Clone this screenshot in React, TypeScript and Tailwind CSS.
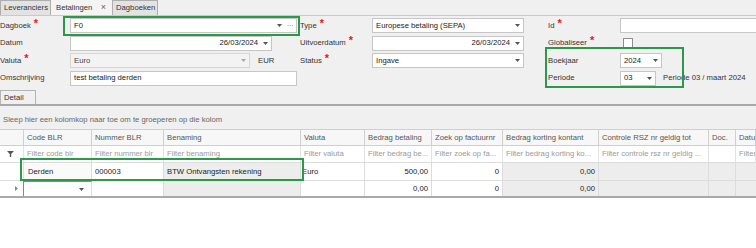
import React from 'react';

const Req = () => <span className="ml-[3px] text-[11px] leading-none font-bold text-[#e8141c] relative -top-[2px]">*</span>;

const Arrow = ({ light = false }: { light?: boolean }) => (
  <svg width="5" height="3" viewBox="0 0 5 3" className="shrink-0">
    <path d="M0 0h5L2.5 3z" fill={light ? '#aaa' : '#555'} />
  </svg>
);

const Field: React.FC<{ className?: string; children?: React.ReactNode }> = ({ className = '', children }) => (
  <div className={`h-[15px] border border-[#c6c6c6] bg-white flex items-center px-[3px] ${className}`}>{children}</div>
);

const Label: React.FC<{ w: string; req?: boolean; children: React.ReactNode }> = ({ w, req, children }) => (
  <div className={`${w} shrink-0 text-[#333] flex items-start`}>
    <span>{children}</span>
    {req && <Req />}
  </div>
);

const colW = ['w-[24px]', 'w-[68px]', 'w-[72px]', 'w-[137px]', 'w-[64px]', 'w-[67px]', 'w-[71px]', 'w-[96px]', 'w-[110px]', 'w-[27px]', 'flex-1'];

const headers = ['', 'Code BLR', 'Nummer BLR', 'Benaming', 'Valuta', 'Bedrag betaling', 'Zoek op factuurnr', 'Bedrag korting kontant', 'Controle RSZ nr geldig tot', 'Doc.', 'Datum'];
const filters = ['', 'Filter code blr', 'Filter nummer blr', 'Filter benaming', 'Filter valuta', 'Filter bedrag be...', 'Filter zoek op fa...', 'Filter bedrag korting ko...', 'Filter controle rsz nr geldig ...', '', 'Filter'];

export default function App() {
  return (
    <div className="w-[756px] h-[248px] bg-white overflow-hidden font-['Liberation_Sans',Arial,sans-serif] text-[7.7px] text-[#222] relative">
      {/* tabs */}
      <div className="h-[16px] bg-[#f0f0f0] border-b border-[#c9c9c9] flex items-end">
        <div className="w-[51px] h-[15px] bg-[#e3e3e3] border border-b-0 border-[#adadad] flex items-center pl-[3px] text-[#333]">Leveranciers</div>
        <div className="w-[61px] h-[15px] bg-[#f4f4f4] flex items-center pl-[5px] text-[#333]">
          <span className="flex-1">Betalingen</span>
          <span className="mr-[6px] text-[9px] text-[#666]">×</span>
        </div>
        <div className="w-[46px] h-[15px] bg-[#e3e3e3] border border-b-0 border-[#adadad] flex items-center pl-[3px] text-[#333]">Dagboeken</div>
      </div>

      {/* form */}
      <div className="h-[72px] bg-[#f0f0f0] flex pt-[1px]">
        <div className="w-[300px] shrink-0 flex flex-col">
          <div className="h-[17.5px] flex items-center">
            <Label w="w-[70px]" req>Dagboek</Label>
            <Field className="w-[227px]">
              <span className="flex-1">F0</span>
              <Arrow />
              <span className="ml-[5px] text-[#666] tracking-[-0.5px]">···</span>
            </Field>
          </div>
          <div className="h-[17.5px] flex items-center">
            <Label w="w-[70px]">Datum</Label>
            <Field className="w-[202px] justify-end">
              <span>26/03/2024</span>
              <span className="ml-[5px]"><Arrow /></span>
            </Field>
          </div>
          <div className="h-[17.5px] flex items-center">
            <Label w="w-[70px]" req>Valuta</Label>
            <Field className="w-[180px] !bg-[#f3f3f3] !border-[#d6d6d6]">
              <span className="flex-1 text-[#444]">Euro</span>
              <Arrow light />
            </Field>
            <span className="ml-[8px] text-[#333]">EUR</span>
          </div>
          <div className="h-[17.5px] flex items-center">
            <Label w="w-[70px]">Omschrijving</Label>
            <Field className="w-[227px]">test betaling derden</Field>
          </div>
        </div>

        <div className="w-[248px] shrink-0 flex flex-col">
          <div className="h-[17.5px] flex items-center">
            <Label w="w-[72px]" req>Type</Label>
            <Field className="w-[152px]">
              <span className="flex-1">Europese betaling (SEPA)</span>
              <Arrow />
            </Field>
          </div>
          <div className="h-[17.5px] flex items-center">
            <Label w="w-[72px]" req>Uitvoerdatum</Label>
            <Field className="w-[152px] justify-end">
              <span>26/03/2024</span>
              <span className="ml-[5px]"><Arrow /></span>
            </Field>
          </div>
          <div className="h-[17.5px] flex items-center">
            <Label w="w-[72px]" req>Status</Label>
            <Field className="w-[152px]">
              <span className="flex-1">Ingave</span>
              <Arrow />
            </Field>
          </div>
        </div>

        <div className="flex-1 flex flex-col">
          <div className="h-[17.5px] flex items-center">
            <Label w="w-[72px]" req>Id</Label>
            <Field className="flex-1 border-r-0" />
          </div>
          <div className="h-[17.5px] flex items-center">
            <Label w="w-[72px]" req>Globaliseer</Label>
            <div className="ml-[3px] w-[10px] h-[10px] border border-[#8f8f8f] bg-white" />
          </div>
          <div className="h-[17.5px] flex items-center">
            <Label w="w-[72px]">Boekjaar</Label>
            <Field className="w-[42px]">
              <span className="flex-1">2024</span>
              <Arrow />
            </Field>
          </div>
          <div className="h-[17.5px] flex items-center">
            <Label w="w-[72px]">Periode</Label>
            <Field className="w-[36px]">
              <span className="flex-1">03</span>
              <Arrow />
            </Field>
            <span className="ml-[7px] text-[#333]">Periode 03 / maart 2024</span>
          </div>
        </div>
      </div>

      {/* detail tab */}
      <div className="h-[16px] bg-[#f0f0f0] flex items-end">
        <div className="w-[36px] h-[14px] bg-[#f0f0f0] border border-b-0 border-[#b4b4b4] flex items-center pl-[3px] text-[#333]">Detail</div>
      </div>
      <div className="h-[2px] bg-[#a9a9a9]" />

      {/* group panel */}
      <div className="h-[23px] bg-[#f0f0f0] flex items-center pl-[3px] pt-[4px] text-[#666]">
        Sleep hier een kolomkop naar toe om te groeperen op die kolom
      </div>

      {/* grid */}
      <div className="flex flex-col">
        <div className="h-[17px] flex bg-[#f7f7f7] border-t border-b border-[#cfcfcf]">
          {headers.map((h, i) => (
            <div key={i} className={`${colW[i]} shrink-0 border-r border-[#cfcfcf] flex items-center pl-[3px] text-[#555] whitespace-nowrap overflow-hidden`}>{h}</div>
          ))}
        </div>
        <div className="h-[17px] flex bg-white border-b border-[#dcdcdc]">
          {filters.map((f, i) => (
            <div key={i} className={`${colW[i]} shrink-0 border-r border-[#e2e2e2] flex items-center pl-[3px] text-[#9a9a9a] whitespace-nowrap overflow-hidden`}>
              {i === 0 ? (
                <svg width="7" height="6" viewBox="0 0 7 6" className="ml-[4px]"><path d="M0 0h7L4.2 3v3h-1.4V3z" fill="#555" /></svg>
              ) : f}
            </div>
          ))}
        </div>
        {/* data row */}
        <div className="h-[18px] flex border-b border-[#dcdcdc]">
          <div className="w-[24px] shrink-0 bg-white border-r border-[#dcdcdc]" />
          <div className="w-[68px] shrink-0 bg-[#fafafa] border-r border-[#dcdcdc] flex items-center pl-[4px]">Derden</div>
          <div className="w-[72px] shrink-0 bg-white border-r border-[#dcdcdc] flex items-center pl-[3px]">000003</div>
          <div className="w-[137px] shrink-0 bg-[#ededed] border-r border-[#dcdcdc] flex items-center pl-[3px]">BTW Ontvangsten rekening</div>
          <div className="w-[64px] shrink-0 bg-white border-r border-[#dcdcdc] flex items-center pl-[1px]">Euro</div>
          <div className="w-[67px] shrink-0 bg-white border-r border-[#dcdcdc] flex items-center justify-end pr-[3px]">500,00</div>
          <div className="w-[71px] shrink-0 bg-white border-r border-[#dcdcdc] flex items-center justify-end pr-[3px]">0</div>
          <div className="w-[96px] shrink-0 bg-[#ededed] border-r border-[#dcdcdc] flex items-center justify-end pr-[3px]">0,00</div>
          <div className="w-[110px] shrink-0 bg-[#ededed] border-r border-[#dcdcdc]" />
          <div className="w-[27px] shrink-0 bg-[#ededed] border-r border-[#dcdcdc]" />
          <div className="flex-1 bg-[#ededed]" />
        </div>
        {/* new row */}
        <div className="h-[17px] flex border-b-2 border-[#a9a9a9]">
          <div className="w-[24px] shrink-0 bg-white border-r border-[#888] flex items-center justify-end pr-[5px]">
            <svg width="3" height="5" viewBox="0 0 3 5"><path d="M0 0l3 2.5L0 5z" fill="#888" /></svg>
          </div>
          <div className="w-[68px] shrink-0 bg-white border-r border-[#dcdcdc] border-t border-t-[#888] flex items-center justify-end pr-[7px]"><Arrow /></div>
          <div className="w-[72px] shrink-0 bg-white border-r border-[#dcdcdc]" />
          <div className="w-[137px] shrink-0 bg-[#ededed] border-r border-[#dcdcdc]" />
          <div className="w-[64px] shrink-0 bg-white border-r border-[#dcdcdc]" />
          <div className="w-[67px] shrink-0 bg-white border-r border-[#dcdcdc] flex items-center justify-end pr-[3px]">0,00</div>
          <div className="w-[71px] shrink-0 bg-white border-r border-[#dcdcdc] flex items-center justify-end pr-[3px]">0</div>
          <div className="w-[96px] shrink-0 bg-[#ededed] border-r border-[#dcdcdc] flex items-center justify-end pr-[3px]">0,00</div>
          <div className="w-[110px] shrink-0 bg-[#ededed] border-r border-[#dcdcdc]" />
          <div className="w-[27px] shrink-0 bg-[#ededed] border-r border-[#dcdcdc]" />
          <div className="flex-1 bg-[#ededed]" />
        </div>
      </div>

      {/* annotation boxes */}
      <div className="absolute left-[63px] top-[16px] w-[237px] h-[20px] border-2 border-[#2a9a4a] pointer-events-none" />
      <div className="absolute left-[545px] top-[47px] w-[139px] h-[41px] border-2 border-[#2a9a4a] pointer-events-none" />
      <div className="absolute left-[20px] top-[158px] w-[284px] h-[23px] border-2 border-[#2a9a4a] pointer-events-none" />
    </div>
  );
}
